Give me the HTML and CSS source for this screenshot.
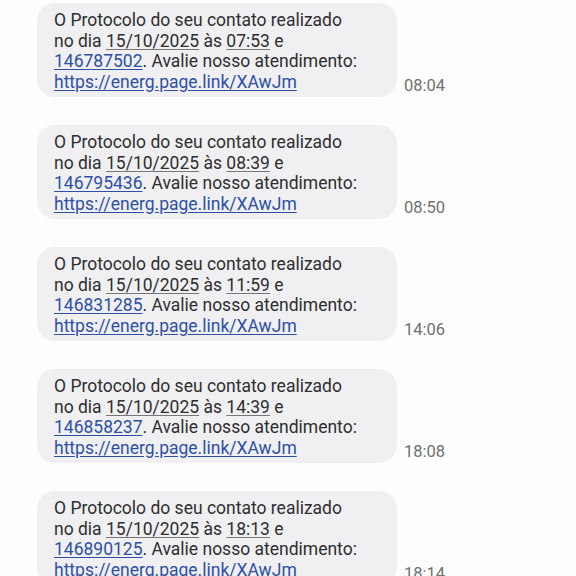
FILE: index.html
```html
<!DOCTYPE html>
<html lang="pt">
<head>
<meta charset="utf-8">
<link rel="stylesheet" href="styles.css">
</head>
<body>
<div class="thread">
  <div class="row">
    <div class="bubble">O Protocolo do seu contato realizado<br>no dia <span class="u">15/10/2025</span> às <span class="u">07:53</span> e<br><span class="lnk">146787502</span>. Avalie nosso atendimento:<br><span class="lnk">https://energ.page.link/XAwJm</span></div>
    <div class="time">08:04</div>
  </div>
  <div class="row">
    <div class="bubble">O Protocolo do seu contato realizado<br>no dia <span class="u">15/10/2025</span> às <span class="u">08:39</span> e<br><span class="lnk">146795436</span>. Avalie nosso atendimento:<br><span class="lnk">https://energ.page.link/XAwJm</span></div>
    <div class="time">08:50</div>
  </div>
  <div class="row">
    <div class="bubble">O Protocolo do seu contato realizado<br>no dia <span class="u">15/10/2025</span> às <span class="u">11:59</span> e<br><span class="lnk">146831285</span>. Avalie nosso atendimento:<br><span class="lnk">https://energ.page.link/XAwJm</span></div>
    <div class="time">14:06</div>
  </div>
  <div class="row">
    <div class="bubble">O Protocolo do seu contato realizado<br>no dia <span class="u">15/10/2025</span> às <span class="u">14:39</span> e<br><span class="lnk">146858237</span>. Avalie nosso atendimento:<br><span class="lnk">https://energ.page.link/XAwJm</span></div>
    <div class="time">18:08</div>
  </div>
  <div class="row">
    <div class="bubble">O Protocolo do seu contato realizado<br>no dia <span class="u">15/10/2025</span> às <span class="u">18:13</span> e<br><span class="lnk">146890125</span>. Avalie nosso atendimento:<br><span class="lnk">https://energ.page.link/XAwJm</span></div>
    <div class="time">18:14</div>
  </div>
</div>
</body>
</html>
```
FILE: styles.css
```css
html, body {
  margin: 0;
  padding: 0;
  background: #fdfdfd;
}
body {
  width: 576px;
  height: 576px;
  overflow: hidden;
  font-family: Roboto, "Noto Sans", sans-serif;
}
.thread {
  display: flex;
  flex-direction: column;
  gap: 28px;
  padding: 3px 0 0 37px;
}
.row {
  display: flex;
  align-items: flex-end;
  gap: 7px;
}
.bubble {
  box-sizing: border-box;
  width: 360px;
  background: #f0f0f2;
  border-radius: 18px;
  padding: 7px 20px 5px 17px;
  font-size: 17.5px;
  line-height: 20.5px;
  color: #2e2e2e;
  white-space: nowrap;
}
.u {
  text-decoration: underline;
  text-decoration-color: #777;
  text-underline-offset: 2px;
}
.lnk {
  color: #2e4fa6;
  text-decoration: underline;
  text-underline-offset: 2px;
}
.time {
  font-size: 16.5px;
  color: #707070;
  line-height: 18px;
  padding-bottom: 2px;
}
```
